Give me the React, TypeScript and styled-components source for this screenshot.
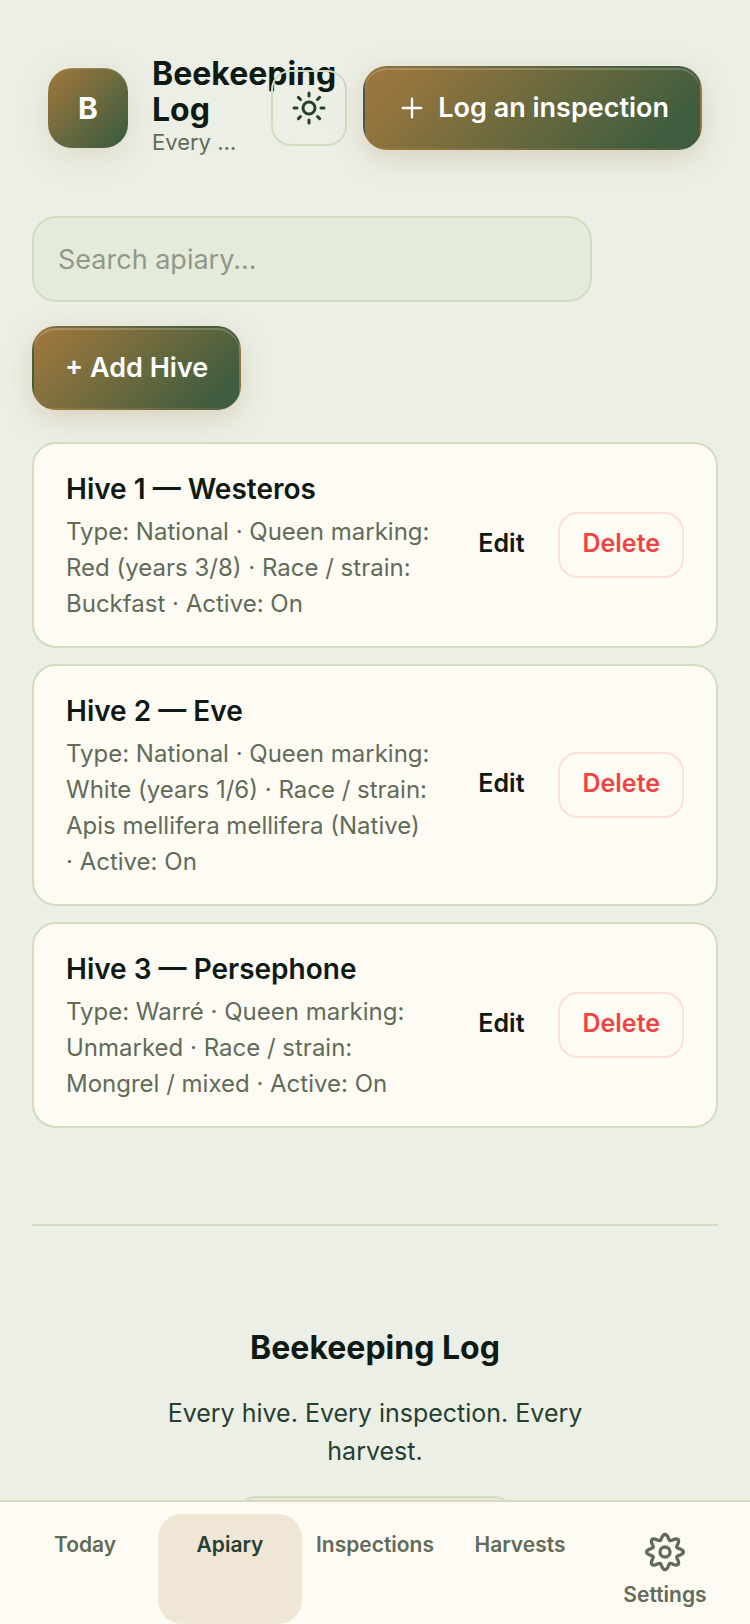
import React, { useState } from "react";
import styled, { createGlobalStyle, css } from "styled-components";
import { Plus, Sun } from "lucide-react";

const color = {
  page: "#ecefe6",
  field: "#e5ebdb",
  card: "#fefbf4",
  line: "#d3dcc1",
  ink: "#0f1a14",
  forest: "#263f2f",
  muted: "#616b58",
  danger: "#ef4444",
};

const GlobalStyle = createGlobalStyle`
  *, *::before, *::after { box-sizing: border-box; }
  body {
    margin: 0;
    background: ${color.page};
    color: ${color.ink};
    font-family: Inter, "Liberation Sans", sans-serif;
    font-size: 24px;
    line-height: 36px;
  }
  button, input { font: inherit; color: inherit; }
  h1, h2, p, ul { margin: 0; padding: 0; }
`;

const Page = styled.div`
  padding: 56px 32px 140px;
`;

const Header = styled.header`
  display: flex;
  align-items: center;
  gap: 16px;
  padding: 0 16px;
`;

const Brand = styled.div`
  display: flex;
  flex: 1;
  align-items: center;
  gap: 24px;
  min-width: 0;
`;

const Logo = styled.div`
  display: grid;
  flex: none;
  place-items: center;
  width: 80px;
  height: 80px;
  border-radius: 24px;
  background: linear-gradient(135deg, #98763d 10%, #405d3f 90%);
  box-shadow: 0 8px 32px rgba(155, 119, 62, 0.18), inset 0 1px 0 rgba(255, 255, 255, 0.15);
  color: #fff;
  font-size: 30px;
  font-weight: 700;
`;

const BrandText = styled.div`
  flex: 1;
  min-width: 0;
  padding: 0 12px 4px 0;
`;

const BrandName = styled.h1`
  font-size: 32px;
  font-weight: 700;
  line-height: 36px;
`;

const Tagline = styled.p`
  overflow: hidden;
  color: ${color.muted};
  font-size: 22px;
  line-height: 28px;
  text-overflow: ellipsis;
  white-space: nowrap;
`;

const ThemeButton = styled.button`
  display: grid;
  flex: none;
  place-items: center;
  width: 76px;
  height: 76px;
  padding: 0;
  border: 2px solid ${color.line};
  border-radius: 20px;
  background: transparent;
  color: ${color.forest};
`;

const PrimaryButton = styled.button`
  display: inline-flex;
  flex: none;
  align-items: center;
  gap: 10px;
  height: 84px;
  padding: 0 31px;
  border: 2px solid transparent;
  border-radius: 24px;
  background: linear-gradient(135deg, #98763d 10%, #405d3f 88%);
  box-shadow: 0 8px 28px rgba(155, 119, 62, 0.25), inset 0 2px 0 rgba(255, 255, 255, 0.18);
  color: #fff;
  font-size: 27px;
  font-weight: 600;
  white-space: nowrap;
`;

const Toolbar = styled.div`
  display: flex;
  flex-wrap: wrap;
  gap: 24px;
  margin: 56px 0 32px;
`;

const SearchField = styled.input`
  flex: 0 1 560px;
  min-width: 0;
  height: 86px;
  padding: 0 24px;
  border: 2px solid ${color.line};
  border-radius: 24px;
  background: ${color.field};
  font-size: 27px;
  &::placeholder { color: #92988a; opacity: 1; }
`;

const HiveList = styled.ul`
  display: grid;
  gap: 16px;
  list-style: none;
`;

const HiveCard = styled.li`
  display: flex;
  align-items: center;
  gap: 22px;
  padding: 24px 32px;
  border: 2px solid ${color.line};
  border-radius: 24px;
  background: ${color.card};
`;

const HiveBody = styled.div`
  flex: 1;
  min-width: 0;
`;

const HiveName = styled.h2`
  margin-bottom: 4px;
  font-size: 28px;
  font-weight: 600;
  line-height: 42px;
`;

const HiveDetails = styled.p`
  color: ${color.muted};
`;

const Actions = styled.div`
  display: flex;
  gap: 10px;
`;

const ActionButton = styled.button<{ $danger?: boolean }>`
  height: 66px;
  padding: 0 22px 4px;
  border: 2px solid transparent;
  border-radius: 20px;
  background: none;
  font-size: 25px;
  font-weight: 600;
  ${(p) => p.$danger && css`
    border-color: #fbe0da;
    color: ${color.danger};
  `}
`;

const Footer = styled.footer`
  display: flex;
  flex-direction: column;
  align-items: center;
  margin-top: 96px;
  padding-top: 96px;
  border-top: 2px solid ${color.line};
  text-align: center;
`;

const FooterTitle = styled.h2`
  font-size: 32px;
  font-weight: 700;
  line-height: 52px;
`;

const FooterText = styled.p`
  max-width: 480px;
  margin: 20px 0 26px;
  color: ${color.forest};
  font-size: 25px;
  line-height: 38px;
`;

const FooterChip = styled.div`
  width: 284px;
  height: 64px;
  border: 2px solid ${color.line};
  border-radius: 24px;
  background: ${color.field};
`;

const TabBar = styled.nav`
  position: fixed;
  inset: auto 0 0;
  display: grid;
  grid-template-columns: repeat(5, minmax(0, 1fr));
  gap: 1px;
  padding: 12px 13px 0;
  border-top: 2px solid ${color.line};
  background: ${color.card};
`;

const Tab = styled.a<{ $active?: boolean }>`
  display: flex;
  flex-direction: column;
  align-items: center;
  gap: 6px;
  height: 110px;
  padding-top: 16px;
  border-radius: 24px;
  background: ${(p) => (p.$active ? "#efe6d6" : "none")};
  color: ${(p) => (p.$active ? color.forest : color.muted)};
  font-size: 21px;
  font-weight: 600;
  line-height: 30px;
  text-decoration: none;
`;

const hives = [
  {
    name: "Hive 1 — Westeros",
    details: "Type: National · Queen marking: Red (years 3/8) · Race / strain: Buckfast · Active: On",
  },
  {
    name: "Hive 2 — Eve",
    details: "Type: National · Queen marking: White (years 1/6) · Race / strain: Apis mellifera mellifera (Native) · Active: On",
  },
  {
    name: "Hive 3 — Persephone",
    details: "Type: Warré · Queen marking: Unmarked · Race / strain: Mongrel / mixed · Active: On",
  },
];

const tabs = ["Today", "Apiary", "Inspections", "Harvests", "Settings"];

// Outline of an eight-toothed gear: the radius swells and dips once per tooth.
const gearOutline = Array.from({ length: 128 }, (_, i) => {
  const angle = (i / 128) * Math.PI * 2;
  const swell = Math.cos(angle * 8);
  const x = 22 + (15.6 + 2.8 * swell) * Math.cos(angle);
  const y = 22 + (15 + 2.7 * swell) * Math.sin(angle);
  return `${x.toFixed(2)},${y.toFixed(2)}`;
}).join(" ");

function GearIcon() {
  return (
    <svg width="44" height="44" viewBox="0 0 44 44" fill="none" stroke="currentColor" strokeWidth="3.3" strokeLinejoin="round" aria-hidden="true">
      <circle cx="22" cy="22" r="5" />
      <polygon points={gearOutline} />
    </svg>
  );
}

export default function App() {
  const [query, setQuery] = useState("");
  const shown = hives.filter((h) => h.name.toLowerCase().includes(query.toLowerCase()));

  return (
    <>
      <GlobalStyle />
      <Page>
        <Header>
          <Brand>
            <Logo>B</Logo>
            <BrandText>
              <BrandName>Beekeeping Log</BrandName>
              <Tagline>Every hive. Every inspection. Every harvest.</Tagline>
            </BrandText>
          </Brand>
          <ThemeButton type="button" aria-label="Toggle theme">
            <Sun size={36} />
          </ThemeButton>
          <PrimaryButton type="button">
            <Plus size={32} strokeWidth={1.75} />
            Log an inspection
          </PrimaryButton>
        </Header>
        <main>
          <Toolbar>
            <SearchField
              type="search"
              aria-label="Search apiary"
              placeholder="Search apiary..."
              value={query}
              onChange={(e) => setQuery(e.target.value)}
            />
            <PrimaryButton type="button">+ Add Hive</PrimaryButton>
          </Toolbar>
          <HiveList>
            {shown.map((hive) => (
              <HiveCard key={hive.name}>
                <HiveBody>
                  <HiveName>{hive.name}</HiveName>
                  <HiveDetails>{hive.details}</HiveDetails>
                </HiveBody>
                <Actions>
                  <ActionButton type="button">Edit</ActionButton>
                  <ActionButton type="button" $danger>Delete</ActionButton>
                </Actions>
              </HiveCard>
            ))}
          </HiveList>
        </main>
        <Footer>
          <FooterTitle>Beekeeping Log</FooterTitle>
          <FooterText>Every hive. Every inspection. Every harvest.</FooterText>
          <FooterChip />
        </Footer>
      </Page>
      <TabBar aria-label="Main">
        {tabs.map((tab) => (
          <Tab key={tab} href={`#${tab.toLowerCase()}`} $active={tab === "Apiary"} aria-current={tab === "Apiary" ? "page" : undefined}>
            {tab === "Settings" && <GearIcon />}
            {tab}
          </Tab>
        ))}
      </TabBar>
    </>
  );
}
